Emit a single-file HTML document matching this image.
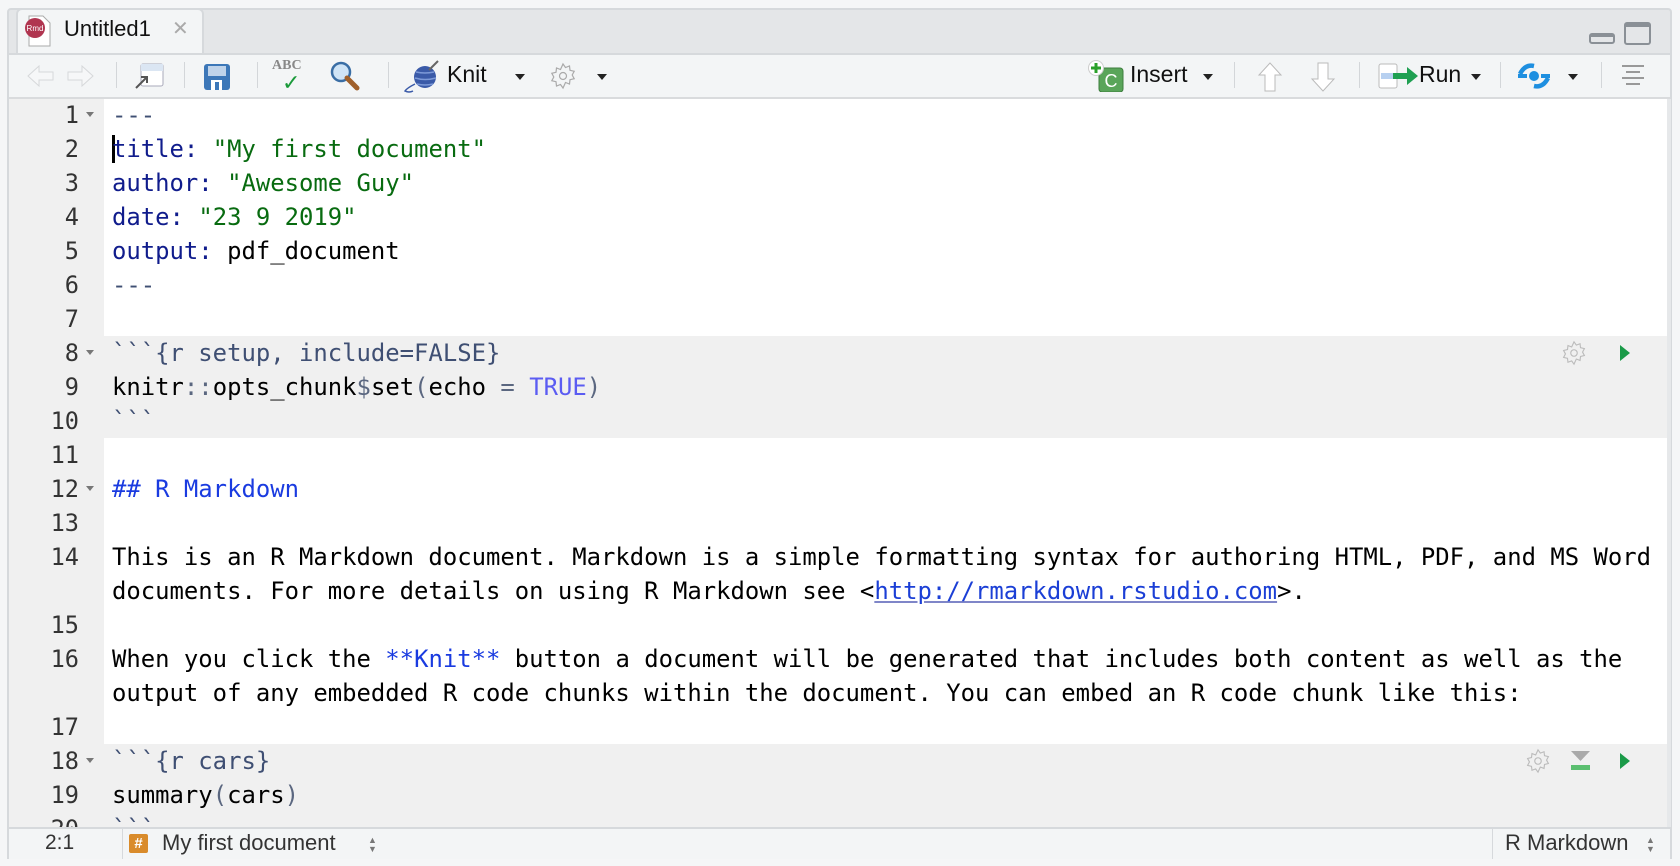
<!DOCTYPE html>
<html><head><meta charset="utf-8"><style>
*{box-sizing:border-box;margin:0;padding:0}
body{width:1680px;height:866px;background:#f5f6f7;position:relative;overflow:hidden;font-family:"Liberation Sans",sans-serif}
.abs{position:absolute}
#frame{left:7px;top:8px;width:1665px;height:851px;border:2px solid #d6d9dc;border-radius:4px 4px 0 0;background:#e4e6e8;overflow:hidden}
#tab{left:16px;top:8px;width:188px;height:47px;background:#f3f5f6;border:2px solid #d6d9dc;border-bottom:none;border-radius:6px 6px 0 0}
#toolbar{left:9px;top:53px;width:1661px;height:46px;background:#f3f5f6;border-top:2px solid #d6d9dc;border-bottom:2px solid #d9dbdd}
.sep{position:absolute;top:62px;width:1px;height:26px;background:#d3d6d9}
.tt{position:absolute;font-size:23px;color:#111;top:61px}
.caret{position:absolute;top:74px;width:0;height:0;border-left:5px solid transparent;border-right:5px solid transparent;border-top:6px solid #222}
#editor{left:9px;top:99px;width:1658px;height:728px;background:#fff;overflow:hidden}
#gutter{left:9px;top:99px;width:95px;height:728px;background:#f0f0f0}
.chunk{position:absolute;left:104px;width:1563px;background:#f0f0f0}
.ln{position:absolute;left:9px;width:70px;text-align:right;font-family:"DejaVu Sans Mono","Liberation Mono",monospace;font-size:23.6px;color:#333;line-height:34px}
.fold{position:absolute;left:86px;width:0;height:0;border-left:4px solid transparent;border-right:4px solid transparent;border-top:5px solid #777}
.row{position:absolute;left:112px;font-family:"DejaVu Sans Mono","Liberation Mono",monospace;font-size:23.9px;line-height:34px;white-space:pre;color:#000}
.sl{color:#3f4f73}.kw{color:#101c8c}.st{color:#086b10}.tr{color:#5b5cf2}.h{color:#1a3be0}.lk{color:#1b3fd6;text-decoration:underline;text-decoration-color:#7f86c8}.p{color:#5b6780}
#status{left:9px;top:827px;width:1661px;height:32px;background:#f3f5f6;border-top:2px solid #d6d9dc}
</style></head><body>
<div id="frame" class="abs"></div>
<div id="tab" class="abs"></div>
<svg class="abs" style="left:24px;top:15px" width="30" height="32" viewBox="0 0 30 32"><path d="M5 1h14l7 7v23H5z" fill="#fff" stroke="#aaa"/><circle cx="11" cy="13" r="10" fill="#b03550"/><text x="11" y="16" font-size="8" fill="#fff" text-anchor="middle" font-family="Liberation Sans">Rmd</text></svg>
<div class="abs" style="left:64px;top:16px;font-size:22px;color:#111">Untitled1</div>
<div class="abs" style="left:172px;top:16px;font-size:20px;color:#aaa">✕</div>
<div class="abs" style="left:1589px;top:33px;width:26px;height:11px;border:2px solid #8a9096;border-top-width:4px;border-radius:3px"></div>
<div class="abs" style="left:1624px;top:22px;width:27px;height:23px;border:2px solid #8a9096;border-top-width:5px;border-radius:3px"></div>

<div id="toolbar" class="abs"></div>
<svg class="abs" style="left:26px;top:63px" width="70" height="26"><path d="M2 13l11-10v6h14v8H13v6z" fill="#f6f7f8" stroke="#d6d8da"/><path d="M67 13L56 3v6H42v8h14v6z" fill="#f6f7f8" stroke="#d6d8da"/></svg>
<div class="sep" style="left:116px"></div>
<svg class="abs" style="left:133px;top:61px" width="32" height="30"><rect x="8" y="3" width="22" height="22" rx="2" fill="#fff" stroke="#aab"/><rect x="8" y="3" width="22" height="7" fill="#dbe6f3"/><path d="M3 27l10-10M8 16h6v6" stroke="#555" fill="none" stroke-width="2"/></svg>
<div class="sep" style="left:184px"></div>
<svg class="abs" style="left:203px;top:62px" width="28" height="30"><rect x="1" y="2" width="26" height="26" rx="3" fill="#3c77b8"/><rect x="5" y="4" width="18" height="10" fill="#bfd3ea"/><rect x="8" y="18" width="11" height="10" fill="#fff"/><rect x="12" y="20" width="4" height="8" fill="#3c77b8"/></svg>
<div class="sep" style="left:257px"></div>
<div class="abs" style="left:272px;top:58px;font-family:'Liberation Serif',serif;font-size:14px;color:#888;font-weight:bold">ABC</div>
<div class="abs" style="left:282px;top:70px;font-size:22px;color:#1a9a3a">✓</div>
<svg class="abs" style="left:329px;top:60px" width="32" height="32"><circle cx="12" cy="12" r="9" fill="#cfe4f6" stroke="#3a6ea5" stroke-width="2.5"/><path d="M18 18l10 10" stroke="#a0602a" stroke-width="5" stroke-linecap="round"/></svg>
<div class="sep" style="left:388px"></div>
<svg class="abs" style="left:403px;top:60px" width="36" height="34"><circle cx="22" cy="17" r="11" fill="#3a5aa8"/><path d="M13 12q9 2 18 0M12 18q10 3 21 0M14 24q8 2 16 0" stroke="#7d9ad8" fill="none" stroke-width="1.5"/><path d="M26 10L35 1" stroke="#666" stroke-width="2"/><path d="M12 24q-8 4-10 7q4 2 8 0" stroke="#3a5aa8" fill="none" stroke-width="1.5"/></svg>
<div class="tt" style="left:447px">Knit</div>
<div class="caret" style="left:515px"></div>
<svg class="abs" style="left:549px;top:62px" width="28" height="28" viewBox="0 0 28 28"><path d="M14 2l2.5 3.5 4-1.5.5 4.3 4.2 1-2 3.7 2 3.7-4.2 1-.5 4.3-4-1.5L14 26l-2.5-3.5-4 1.5-.5-4.3-4.2-1 2-3.7-2-3.7 4.2-1 .5-4.3 4 1.5z" fill="none" stroke="#aaa" stroke-width="1.2"/><circle cx="14" cy="14" r="3.5" fill="none" stroke="#aaa" stroke-width="1.2"/></svg>
<div class="caret" style="left:597px"></div>

<svg class="abs" style="left:1088px;top:60px" width="36" height="32"><rect x="11" y="8" width="24" height="24" rx="3" fill="#5aa55a" stroke="#3e7e3e"/><text x="23" y="27" font-size="18" fill="#fff" text-anchor="middle" font-family="Liberation Sans">C</text><circle cx="8" cy="8" r="7.5" fill="#fff" stroke="#ccc"/><path d="M8 3v10M3 8h10" stroke="#2aa02a" stroke-width="3"/></svg>
<div class="tt" style="left:1130px">Insert</div>
<div class="caret" style="left:1203px"></div>
<div class="sep" style="left:1234px"></div>
<svg class="abs" style="left:1256px;top:61px" width="28" height="32"><path d="M14 2L3 14h6v16h10V14h6z" fill="#fff" stroke="#bbb"/></svg>
<svg class="abs" style="left:1309px;top:61px" width="28" height="32"><path d="M14 30L3 18h6V2h10v16h6z" fill="#fff" stroke="#bbb"/></svg>
<div class="sep" style="left:1359px"></div>
<svg class="abs" style="left:1378px;top:62px" width="42" height="28"><rect x="1" y="2" width="18" height="24" rx="2" fill="#fff" stroke="#bbb"/><rect x="3" y="11" width="14" height="6" fill="#b7d0f0"/><path d="M15 11h14V5l11 9-11 9v-6H15z" fill="#1fa052"/></svg>
<div class="tt" style="left:1419px">Run</div>
<div class="caret" style="left:1471px"></div>
<div class="sep" style="left:1500px"></div>
<svg class="abs" style="left:1517px;top:62px" width="34" height="28"><path d="M3 12Q8 2 17 4M31 16Q26 26 17 24" stroke="#1e8fe0" stroke-width="4.5" fill="none"/><path d="M1 14h9M24 14h9" stroke="#1e8fe0" stroke-width="4"/><circle cx="17" cy="14" r="5" fill="#1e8fe0"/></svg>
<div class="caret" style="left:1568px"></div>
<div class="sep" style="left:1601px"></div>
<svg class="abs" style="left:1620px;top:63px" width="26" height="24"><path d="M2 3h22M6 9h14M2 15h22M6 21h14" stroke="#999" stroke-width="2"/></svg>

<div id="editor" class="abs"></div>
<div id="gutter" class="abs"></div>
<div class="chunk" style="top:336px;height:102px"></div>
<div class="chunk" style="top:744px;height:83px"></div>

<div class="ln" style="top:98px">1</div><div class="fold" style="top:112px"></div>
<div class="ln" style="top:132px">2</div>
<div class="ln" style="top:166px">3</div>
<div class="ln" style="top:200px">4</div>
<div class="ln" style="top:234px">5</div>
<div class="ln" style="top:268px">6</div>
<div class="ln" style="top:302px">7</div>
<div class="ln" style="top:336px">8</div><div class="fold" style="top:350px"></div>
<div class="ln" style="top:370px">9</div>
<div class="ln" style="top:404px">10</div>
<div class="ln" style="top:438px">11</div>
<div class="ln" style="top:472px">12</div><div class="fold" style="top:486px"></div>
<div class="ln" style="top:506px">13</div>
<div class="ln" style="top:540px">14</div>
<div class="ln" style="top:608px">15</div>
<div class="ln" style="top:642px">16</div>
<div class="ln" style="top:710px">17</div>
<div class="ln" style="top:744px">18</div><div class="fold" style="top:758px"></div>
<div class="ln" style="top:778px">19</div>
<div class="ln" style="top:812px">20</div>

<div class="abs" style="left:112px;top:135px;width:3px;height:28px;background:#000"></div>
<div class="row sl" style="top:98px">---</div>
<div class="row" style="top:132px"><span class="kw">title:</span> <span class="st">"My first document"</span></div>
<div class="row" style="top:166px"><span class="kw">author:</span> <span class="st">"Awesome Guy"</span></div>
<div class="row" style="top:200px"><span class="kw">date:</span> <span class="st">"23 9 2019"</span></div>
<div class="row" style="top:234px"><span class="kw">output:</span> pdf_document</div>
<div class="row sl" style="top:268px">---</div>
<div class="row sl" style="top:336px">&#96;&#96;&#96;{r setup, include=FALSE}</div>
<div class="row" style="top:370px">knitr<span class="p">::</span>opts_chunk<span class="p">$</span>set<span class="p">(</span>echo <span class="p">=</span> <span class="tr">TRUE</span><span class="p">)</span></div>
<div class="row sl" style="top:404px">&#96;&#96;&#96;</div>
<div class="row h" style="top:472px">## R Markdown</div>
<div class="row" style="top:540px">This is an R Markdown document. Markdown is a simple formatting syntax for authoring HTML, PDF, and MS Word</div>
<div class="row" style="top:574px">documents. For more details on using R Markdown see &lt;<span class="lk">http://rmarkdown.rstudio.com</span>&gt;.</div>
<div class="row" style="top:642px">When you click the <span class="h">**Knit**</span> button a document will be generated that includes both content as well as the</div>
<div class="row" style="top:676px">output of any embedded R code chunks within the document. You can embed an R code chunk like this:</div>
<div class="row sl" style="top:744px">&#96;&#96;&#96;{r cars}</div>
<div class="row" style="top:778px">summary<span class="p">(</span>cars<span class="p">)</span></div>
<div class="row sl" style="top:812px">&#96;&#96;&#96;</div>

<svg class="abs" style="left:1561px;top:340px" width="26" height="26" viewBox="0 0 28 28"><path d="M14 2l2.5 3.5 4-1.5.5 4.3 4.2 1-2 3.7 2 3.7-4.2 1-.5 4.3-4-1.5L14 26l-2.5-3.5-4 1.5-.5-4.3-4.2-1 2-3.7-2-3.7 4.2-1 .5-4.3 4 1.5z" fill="none" stroke="#bbb" stroke-width="1.2"/><circle cx="14" cy="14" r="3.5" fill="none" stroke="#bbb" stroke-width="1.2"/></svg>
<svg class="abs" style="left:1619px;top:344px" width="12" height="18"><path d="M1 1l10 8-10 8z" fill="#1a9a48"/></svg>
<svg class="abs" style="left:1525px;top:748px" width="26" height="26" viewBox="0 0 28 28"><path d="M14 2l2.5 3.5 4-1.5.5 4.3 4.2 1-2 3.7 2 3.7-4.2 1-.5 4.3-4-1.5L14 26l-2.5-3.5-4 1.5-.5-4.3-4.2-1 2-3.7-2-3.7 4.2-1 .5-4.3 4 1.5z" fill="none" stroke="#bbb" stroke-width="1.2"/><circle cx="14" cy="14" r="3.5" fill="none" stroke="#bbb" stroke-width="1.2"/></svg>
<svg class="abs" style="left:1571px;top:751px" width="20" height="20"><path d="M0 0h19l-9.5 10z" fill="#aaa"/><rect x="0" y="14" width="19" height="5" fill="#5bbf70"/></svg>
<svg class="abs" style="left:1619px;top:752px" width="12" height="18"><path d="M1 1l10 8-10 8z" fill="#1a9a48"/></svg>

<div class="abs" style="left:1667px;top:99px;width:4px;height:728px;background:#e6e8ea"></div>

<div id="status" class="abs"></div>
<div class="abs" style="left:45px;top:831px;font-size:21px;color:#333">2:1</div>
<div class="abs" style="left:122px;top:829px;width:1px;height:30px;background:#d6d9dc"></div>
<div class="abs" style="left:129px;top:834px;width:19px;height:19px;background:#d98b2b;border-radius:2px;color:#fff;font-size:15px;text-align:center;line-height:19px;font-weight:bold">#</div>
<div class="abs" style="left:162px;top:830px;font-size:22px;color:#333">My first document</div>
<div class="abs" style="left:368px;top:836px;font-size:9px;color:#777;line-height:9px">▲<br>▼</div>
<div class="abs" style="left:1492px;top:829px;width:1px;height:30px;background:#d6d9dc"></div>
<div class="abs" style="left:1505px;top:830px;font-size:22px;color:#333">R Markdown</div>
<div class="abs" style="left:1646px;top:836px;font-size:9px;color:#777;line-height:9px">▲<br>▼</div>
</body></html>
